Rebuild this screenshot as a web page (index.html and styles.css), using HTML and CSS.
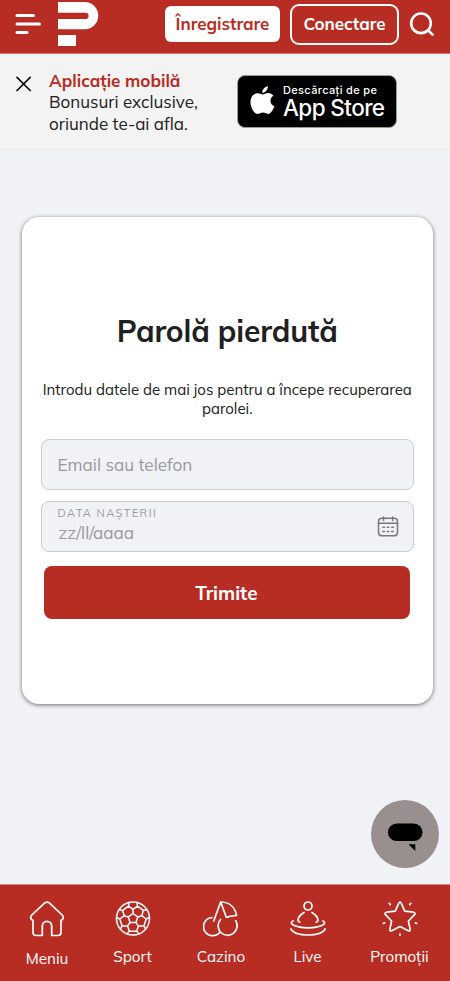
FILE: index.html
```html
<!DOCTYPE html>
<html lang="ro">
<head>
<meta charset="utf-8">
<meta name="viewport" content="width=device-width, initial-scale=1">
<title>Parolă pierdută</title>
<link rel="stylesheet" href="styles.css">
</head>
<body>
<header class="header">
  <button class="icon-button menu-button" aria-label="Meniu">
    <svg width="28" height="24" viewBox="0 0 28 24" fill="none" stroke="#fff" stroke-width="3" stroke-linecap="round"><path d="M2 3.500H18.500M2 12H24.500M2 20.500H12"/></svg>
  </button>
  <svg class="logo" width="41" height="46" viewBox="0 0 41 46" fill="#fff"><path d="M0 1H26.700A13.600 13.600 0 0 1 26.700 28.200H0V18H27.500A3.100 3.100 0 0 0 27.500 11.800H0ZM0 34H18V45H0Z"/></svg>
  <button class="register">Înregistrare</button>
  <button class="login">Conectare</button>
  <button class="icon-button search-button" aria-label="Caută">
    <svg width="26" height="26" viewBox="0 0 26 26" fill="none" stroke="#fff" stroke-width="2.600" stroke-linecap="round"><circle cx="12" cy="11.300" r="9.800"/><path d="m19.200 18.300 4.300 4.300"/></svg>
  </button>
</header>
<section class="promo">
  <button class="icon-button close-button" aria-label="Închide">
    <svg width="16" height="16" viewBox="0 0 16 16" fill="none" stroke="#111" stroke-width="1.700" stroke-linecap="round"><path d="m1 1.300 13.200 13.200M14.200 1.300 1 14.500"/></svg>
  </button>
  <div class="promo-text">
    <strong class="promo-title">Aplicație mobilă</strong>
    <span class="promo-line">Bonusuri exclusive,</span>
    <span class="promo-line">oriunde te-ai afla.</span>
  </div>
  <a class="store">
    <svg width="25" height="30" viewBox="0 0 25 30" fill="#fff"><path d="M17.800.2C18.100 3.400 15.400 6.800 12.300 6.800 11.900 3.800 14.800.7 17.800.2ZM12.700 8.500C14 8.500 15.700 7 18.200 7c1.900 0 4 1 5.200 2.800-4.300 2.400-3.700 8.700.9 10.400-.7 2.100-3 7.600-6 7.700-2 0-2.800-1.300-5.200-1.300s-3.300 1.300-5.200 1.300C4.500 28 .5 21.800.5 16.200.5 10.500 4.100 7.300 7.700 7.300c2.200 0 3.800 1.200 5 1.200Z"/></svg>
    <span class="store-text"><span class="store-small">Descărcați de pe</span><span class="store-name">App Store</span></span>
  </a>
</section>
<main class="main">
  <form class="card">
    <h1 class="title">Parolă pierdută</h1>
    <p class="intro"><span class="intro-first">Introdu datele de mai jos pentru a începe recuperarea</span> parolei.</p>
    <div class="field"><span class="placeholder">Email sau telefon</span></div>
    <div class="field date-field">
      <div class="date-text"><span class="date-label">DATA NAȘTERII</span><span class="placeholder date-placeholder">zz/ll/aaaa</span></div>
      <svg width="22" height="22" viewBox="0 0 22 22" fill="none" stroke="#77797c" stroke-width="1.500" stroke-linecap="round"><rect x="1.500" y="2.300" width="19" height="17.500" rx="3.200"/><path d="M1.500 7.300H20.500M6.500 1V4.500M15.700 1V4.500M5.900 11.300H7.500M10.300 11.300h1.600M14.700 11.300h1.600M5.900 15.500H7.500M10.300 15.500h1.600M14.700 15.500h1.600"/></svg>
    </div>
    <button type="button" class="submit">Trimite</button>
  </form>
</main>
<button class="chat" aria-label="Chat">
  <svg width="68" height="68" viewBox="0 0 68 68"><rect x="17" y="23.500" width="34.500" height="17.500" rx="8.700"/><path d="M37.500 44.300H44.300V51Z"/></svg>
</button>
<nav class="nav">
  <a class="nav-item home">
    <svg class="nav-icon" viewBox="0 0 36 36"><path d="M15.700 1.900Q18 .2 20.300 1.900L33.200 14Q35.500 16.800 33.200 18.700L32 19.300V31.500Q32 34.500 29 34.500H22.700V25A4.700 4.700 0 0 0 13.300 25V34.500H7Q4 34.500 4 31.500V19.300L2.800 18.700Q.5 16.800 2.800 14Z"/></svg>
    <span class="label">Meniu</span>
  </a>
  <a class="nav-item">
    <svg class="nav-icon ball" viewBox="0 0 36 36"><circle cx="18" cy="17.500" r="16.500"/><path transform="translate(0 -.5)" d="m18 13 4.750 3.450-1.800 5.600h-5.900l-1.800-5.600ZM18 13V8.800M22.750 16.450l3.950-1.250M20.950 22.050l2.450 3.350M15.050 22.050l-2.450 3.350M13.250 16.450 9.300 15.200M14 2l-.5 3.600L18 8.800l4.500-3.200L22 2M22.500 5.600l5.900 4.300M32 9.300l-3.600.6-1.700 5.300 4.500 3.300 3.300-1.700M31.200 18.500l-2.300 6.900M30.600 28.600l-1.700-3.200h-5.500l-1.800 5.300 2.600 2.600M21.600 30.700h-7.200M11.800 33.300l2.600-2.600-1.800-5.300H7.100l-1.700 3.200M7.100 25.400l-2.300-6.900M1.500 16.800l3.300 1.700 4.500-3.300-1.700-5.300L4 9.300M7.600 9.900l5.900-4.300"/></svg>
    <span class="label">Sport</span>
  </a>
  <a class="nav-item">
    <svg class="nav-icon" viewBox="0 0 36 36"><path d="M10.700 20 17.700 1 23.300 16.200M17.700 1C26 1 32 6 33.500 14.500 30.500 14.500 27 14.800 24.700 16.200L23.300 16.200M9 16.500A9.100 9.100 0 1 0 16.800 31.200M17.500 18.500A9.500 9.500 0 1 0 32.700 19.800" /></svg>
    <span class="label">Cazino</span>
  </a>
  <a class="nav-item">
    <svg class="nav-icon" viewBox="0 0 36 36"><circle cx="18" cy="5" r="4"/><path d="M14 11.500Q9 14.500 8.200 18Q7.500 20 9.800 21.200M22 11.500Q27 14.500 27.800 18Q28.500 20 26.200 21.200M3 20C-2 22.500 5 26.800 18 26.800S38 22.500 33 20M.8 28C3 32 10 34 18 34s15-2 17.200-6"/></svg>
    <span class="label">Live</span>
  </a>
  <a class="nav-item promotions">
    <svg class="nav-icon" viewBox="0 0 36 36"><path d="M16.700 2.300Q18 0 19.300 2.300L22.800 10.200 31.500 11.200Q34 12 32.300 13.800L26.400 20 28.200 28.300Q28.300 30.500 26.300 29.800L18 25.500 9.700 29.800Q7.700 30.500 7.800 28.300L9.600 20 3.700 13.800Q2 12 4.500 11.200L13.200 10.200ZM7.300 2.300l.9 1.400M28.700 2.300l-.9 1.400M1.200 22.500l1.400-.6M34.800 22.500l-1.400-.6M18 33v1.300"/></svg>
    <span class="label">Promoții</span>
  </a>
</nav>
</body>
</html>
```
FILE: styles.css
```css
* { box-sizing: border-box; }
body {
  margin: 0;
  height: 981px;
  display: flex;
  flex-direction: column;
  overflow: hidden;
  background: #f1f2f6;
  color: #202020;
  font-family: "Mulish", "Open Sans", sans-serif;
}
button { font: inherit; margin: 0; padding: 0; border: 0; }
svg { display: block; flex: none; }
.icon-button { background: none; }
.header {
  height: 54px;
  flex: none;
  display: flex;
  align-items: flex-start;
  background: #b72d23;
  border-bottom: 1px solid #cf7b74;
}
.menu-button { margin: 12px 0 0 15px; }
.logo { margin: 1px 0 0 15px; }
.register, .login {
  padding-bottom: 1px;
  font-weight: 700;
  font-size: 17px;
  white-space: nowrap;
}
.register {
  margin: 6px 0 0 66px;
  width: 115px;
  height: 36px;
  border-radius: 6px;
  background: #fff;
  color: #b72d23;
}
.login {
  margin: 4px 0 0 10px;
  padding-bottom: 2px;
  width: 109px;
  height: 41px;
  border: 2px solid #fff;
  border-radius: 9px;
  background: none;
  color: #fff;
}
.search-button { margin: 12px 0 0 10px; }
.promo {
  height: 96px;
  flex: none;
  display: flex;
  align-items: flex-start;
  background: #f3f3f3;
  border-bottom: 1px solid #e4e5e8;
}
.close-button { margin: 22px 0 0 16px; }
.promo-text { width: 171px; margin: 16px 0 0 17px; font-size: 17px; line-height: 21.300px; }
.promo-title, .promo-line { display: block; width: max-content; white-space: nowrap; }
.promo-title { font-weight: 700; color: #b72d23; }
.store {
  margin: 21px 0 0 17px;
  width: 160px;
  height: 53px;
  display: flex;
  padding: 10px 0 0 12px;
  gap: 8px;
  border: 1px solid #999;
  border-radius: 8px;
  background: #000;
  color: #fff;
  font-family: Inter, sans-serif;
}
.store-text { display: flex; flex-direction: column; margin-top: -3px; white-space: nowrap; }
.store-small { font-size: 11px; line-height: 14px; font-weight: 500; letter-spacing: .35px; }
.store-name { font-size: 22.500px; line-height: 22px; font-weight: 500; letter-spacing: -.6px; }
.main { flex: 1; padding: 67px 17px 0 21.500px; }
.card {
  height: 487px;
  padding: 94px 19px 0;
  border-radius: 17px;
  background: #fff;
  box-shadow: 0 1px 4px rgba(0,0,0,.55);
  text-align: center;
}
.title { margin: 0; font-size: 30px; line-height: 40px; font-weight: 700; letter-spacing: -.12px; white-space: nowrap; }
.intro { margin: 30px -10px 0; font-size: 15px; line-height: 18.500px; }
.intro-first { display: block; white-space: nowrap; }
.field {
  height: 51px;
  margin-top: 21px;
  padding: 0 14px 0 16px;
  display: flex;
  align-items: center;
  justify-content: space-between;
  border: 1px solid #cbcccf;
  border-radius: 8px;
  background: #f1f2f6;
}
.placeholder { font-size: 17.100px; color: #999a9d; }
.date-field { margin-top: 11px; }
.date-text { display: flex; flex-direction: column; align-items: flex-start; }
.date-label { font-size: 11px; line-height: 17px; letter-spacing: 1.400px; color: #999a9d; }
.date-placeholder { line-height: 22px; margin: 0 0 4px 1px; }
.submit {
  display: block;
  width: 366px;
  height: 53px;
  margin: 14px 0 0 3px;
  border-radius: 8px;
  background: #b72d23;
  color: #fff;
  font-size: 19px;
  font-weight: 700;
}
.chat {
  position: absolute;
  left: 370.500px;
  top: 799.500px;
  width: 68px;
  height: 68px;
  border-radius: 50%;
  background: #988f8e;
}
.nav {
  height: 97px;
  flex: none;
  display: grid;
  grid-template-columns: 94px 77px 100px 73px 106px;
  background: #b72d23;
  border-top: 1px solid #d98a86;
  color: #fff;
}
.nav-item { display: flex; flex-direction: column; align-items: center; padding-top: 16px; gap: 9px; }
.home { gap: 11px; }
.promotions { padding-left: 5px; }
.nav-icon { width: 36px; height: 36px; fill: none; stroke: #fff; stroke-width: 1.700; stroke-linecap: round; stroke-linejoin: round; }
.ball { stroke-width: 1.500; }
.label { font-size: 15.200px; line-height: 21px; white-space: nowrap; }
```
